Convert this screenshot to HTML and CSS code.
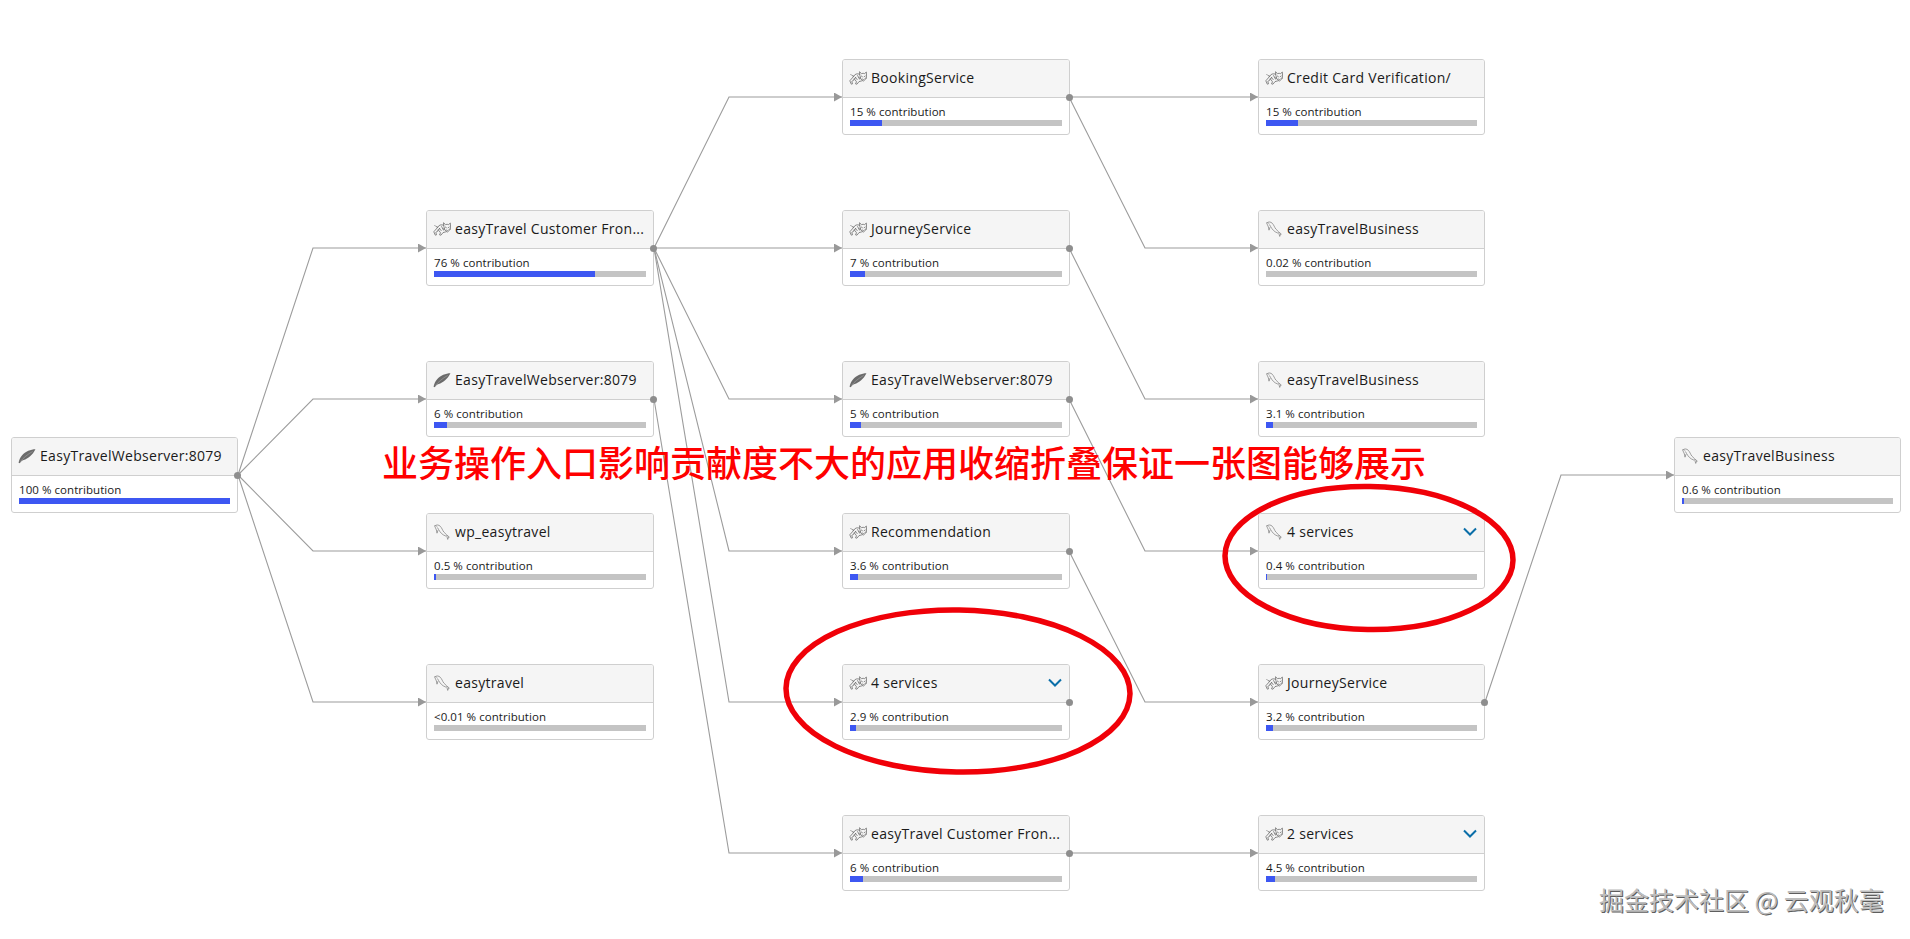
FILE: index.html
```html
<!DOCTYPE html>
<html lang="zh">
<head>
<meta charset="utf-8">
<title>Service flow</title>
<link rel="stylesheet" href="styles.css">
</head>
<body>
<svg class="hidden-defs" width="0" height="0">
  <defs>
    <symbol id="tomcat" viewBox="0 0 18 14">
      <g fill="none" stroke="#666" stroke-width=".75" stroke-linejoin="round" stroke-linecap="round">
        <path d="M10.8 1l1.7 1.6q1.700-.6 3.200 0L17.300 1l.3 4q-.2 3.200-3.300 5.300Q11.200 8.200 10.900 5z"/>
        <path d="M12.300 5l1.100.7M16.200 5l-1.100.7M13.400 8l.9.7.9-.7M11.500 7.200l-1.500-.4M17 7.200l.8-.3"/>
        <path d="M10.700 3.200C8 2.200 5.800 3 4.800 5.200L3 4.600 1.800 3.400"/>
        <path d="M4.800 5.200L.8 9.800l1.500 3.400 1.200-.4-.7-2.400 3-2 1.700 2.400-1 2 1.500.4 2-2.600 2.600-.7"/>
        <path d="M6.200 6.200l2 2.400M8.600 4.600l2 3.600M4.600 8.200l2.300-1.600"/>
      </g>
    </symbol>
    <symbol id="mysql" viewBox="0 0 16 16">
      <g fill="none" stroke="#828282" stroke-width=".75" stroke-linecap="round" stroke-linejoin="round">
        <path d="M.8 1.800C2.500.4 4.800.8 6.200 2.200c1.800 1.800 2.200 4 3.600 5.800 1.500 1.900 3.600 3.300 5.400 5"/>
        <path d="M.8 1.800c.2 1.700 1.100 2.700 1.600 4.200l.6 3.200.9-2.700M3.600 3.800c1.600 2.800 2.800 5.200 5.600 7l2.400 1.200"/>
        <path d="M12.700 11.600l1 3.800.9-2.200M2.300 1.900l.4.500"/>
      </g>
    </symbol>
    <symbol id="apache" viewBox="0 0 16 14">
      <path fill="#6b6b6b" d="M15.500 1C11.500 1 6.500 3 3.500 6.500 2 8.300 1 10.500.5 13l1 .5C2.500 12 3.500 11 5 10.500c4-1 8-4.500 10.500-9.500z"/>
      <path fill="none" stroke="#a8a8a8" stroke-width=".5" d="M2 12C5 8.500 8.500 5.500 13 3"/>
    </symbol>
    <marker id="arrow" viewBox="0 0 8 9" refX="8" refY="4.500" markerWidth="8" markerHeight="9" markerUnits="userSpaceOnUse" orient="auto">
      <path d="M0 0L8 4.500 0 9z" fill="#999"/>
    </marker>
  </defs>
</svg>

<main class="canvas">
  <svg class="edges" width="1910" height="939" viewBox="0 0 1910 939">
    <g class="edge-lines">
      <polyline marker-end="url(#arrow)" points="238,475 313,248 426,248"/>
      <polyline marker-end="url(#arrow)" points="238,475 313,399 426,399"/>
      <polyline marker-end="url(#arrow)" points="238,475 313,551 426,551"/>
      <polyline marker-end="url(#arrow)" points="238,475 313,702 426,702"/>

      <polyline marker-end="url(#arrow)" points="654,248 729,97 842,97"/>
      <polyline marker-end="url(#arrow)" points="654,248 729,248 842,248"/>
      <polyline marker-end="url(#arrow)" points="654,248 729,399 842,399"/>
      <polyline marker-end="url(#arrow)" points="654,248 729,551 842,551"/>
      <polyline marker-end="url(#arrow)" points="654,248 729,702 842,702"/>
      <polyline marker-end="url(#arrow)" points="654,399 729,853 842,853"/>

      <polyline marker-end="url(#arrow)" points="1069,97 1145,97 1258,97"/>
      <polyline marker-end="url(#arrow)" points="1069,97 1145,248 1258,248"/>
      <polyline marker-end="url(#arrow)" points="1069,248 1145,399 1258,399"/>
      <polyline marker-end="url(#arrow)" points="1069,399 1145,551 1258,551"/>
      <polyline marker-end="url(#arrow)" points="1069,551 1145,702 1258,702"/>
      <polyline marker-end="url(#arrow)" points="1069,853 1145,853 1258,853"/>

      <polyline marker-end="url(#arrow)" points="1485,702 1561,475 1674,475"/>
    </g>
  </svg>

  <article class="node c0 y-mid">
    <header class="node-head"><svg class="ico"><use href="#apache"/></svg><span class="name">EasyTravelWebserver:8079</span></header>
    <div class="node-body"><div class="label">100 % contribution</div><div class="bar"><div class="fill" style="width:100%"></div></div></div>
    <i class="dot"></i>
  </article>

  <article class="node c1 r1">
    <header class="node-head"><svg class="ico"><use href="#tomcat"/></svg><span class="name">easyTravel Customer Fron...</span></header>
    <div class="node-body"><div class="label">76 % contribution</div><div class="bar"><div class="fill" style="width:76%"></div></div></div>
    <i class="dot"></i>
  </article>
  <article class="node c1 r2">
    <header class="node-head"><svg class="ico"><use href="#apache"/></svg><span class="name">EasyTravelWebserver:8079</span></header>
    <div class="node-body"><div class="label">6 % contribution</div><div class="bar"><div class="fill" style="width:6%"></div></div></div>
    <i class="dot"></i>
  </article>
  <article class="node c1 r3">
    <header class="node-head"><svg class="ico"><use href="#mysql"/></svg><span class="name">wp_easytravel</span></header>
    <div class="node-body"><div class="label">0.5 % contribution</div><div class="bar"><div class="fill" style="width:1%"></div></div></div>
  </article>
  <article class="node c1 r4">
    <header class="node-head"><svg class="ico"><use href="#mysql"/></svg><span class="name">easytravel</span></header>
    <div class="node-body"><div class="label">&lt;0.01 % contribution</div><div class="bar"></div></div>
  </article>

  <article class="node c2 r0">
    <header class="node-head"><svg class="ico"><use href="#tomcat"/></svg><span class="name">BookingService</span></header>
    <div class="node-body"><div class="label">15 % contribution</div><div class="bar"><div class="fill" style="width:15%"></div></div></div>
    <i class="dot"></i>
  </article>
  <article class="node c2 r1">
    <header class="node-head"><svg class="ico"><use href="#tomcat"/></svg><span class="name">JourneyService</span></header>
    <div class="node-body"><div class="label">7 % contribution</div><div class="bar"><div class="fill" style="width:7%"></div></div></div>
    <i class="dot"></i>
  </article>
  <article class="node c2 r2">
    <header class="node-head"><svg class="ico"><use href="#apache"/></svg><span class="name">EasyTravelWebserver:8079</span></header>
    <div class="node-body"><div class="label">5 % contribution</div><div class="bar"><div class="fill" style="width:5%"></div></div></div>
    <i class="dot"></i>
  </article>
  <article class="node c2 r3">
    <header class="node-head"><svg class="ico"><use href="#tomcat"/></svg><span class="name">Recommendation</span></header>
    <div class="node-body"><div class="label">3.6 % contribution</div><div class="bar"><div class="fill" style="width:3.6%"></div></div></div>
    <i class="dot"></i>
  </article>
  <article class="node c2 r4">
    <header class="node-head"><svg class="ico"><use href="#tomcat"/></svg><span class="name">4 services</span><svg class="chev" viewBox="0 0 14 9"><path d="M1 1.500l6 6 6-6"/></svg></header>
    <div class="node-body"><div class="label">2.9 % contribution</div><div class="bar"><div class="fill" style="width:2.9%"></div></div></div>
    <i class="dot"></i>
  </article>
  <article class="node c2 r5">
    <header class="node-head"><svg class="ico"><use href="#tomcat"/></svg><span class="name">easyTravel Customer Fron...</span></header>
    <div class="node-body"><div class="label">6 % contribution</div><div class="bar"><div class="fill" style="width:6%"></div></div></div>
    <i class="dot"></i>
  </article>

  <article class="node c3 r0">
    <header class="node-head"><svg class="ico"><use href="#tomcat"/></svg><span class="name">Credit Card Verification/</span></header>
    <div class="node-body"><div class="label">15 % contribution</div><div class="bar"><div class="fill" style="width:15%"></div></div></div>
  </article>
  <article class="node c3 r1">
    <header class="node-head"><svg class="ico"><use href="#mysql"/></svg><span class="name">easyTravelBusiness</span></header>
    <div class="node-body"><div class="label">0.02 % contribution</div><div class="bar"></div></div>
  </article>
  <article class="node c3 r2">
    <header class="node-head"><svg class="ico"><use href="#mysql"/></svg><span class="name">easyTravelBusiness</span></header>
    <div class="node-body"><div class="label">3.1 % contribution</div><div class="bar"><div class="fill" style="width:3.1%"></div></div></div>
  </article>
  <article class="node c3 r3">
    <header class="node-head"><svg class="ico"><use href="#mysql"/></svg><span class="name">4 services</span><svg class="chev" viewBox="0 0 14 9"><path d="M1 1.500l6 6 6-6"/></svg></header>
    <div class="node-body"><div class="label">0.4 % contribution</div><div class="bar"><div class="fill" style="width:.6%"></div></div></div>
  </article>
  <article class="node c3 r4">
    <header class="node-head"><svg class="ico"><use href="#tomcat"/></svg><span class="name">JourneyService</span></header>
    <div class="node-body"><div class="label">3.2 % contribution</div><div class="bar"><div class="fill" style="width:3.2%"></div></div></div>
    <i class="dot"></i>
  </article>
  <article class="node c3 r5">
    <header class="node-head"><svg class="ico"><use href="#tomcat"/></svg><span class="name">2 services</span><svg class="chev" viewBox="0 0 14 9"><path d="M1 1.500l6 6 6-6"/></svg></header>
    <div class="node-body"><div class="label">4.5 % contribution</div><div class="bar"><div class="fill" style="width:4.5%"></div></div></div>
  </article>

  <article class="node c4 y-mid">
    <header class="node-head"><svg class="ico"><use href="#mysql"/></svg><span class="name">easyTravelBusiness</span></header>
    <div class="node-body"><div class="label">0.6 % contribution</div><div class="bar"><div class="fill" style="width:1%"></div></div></div>
  </article>

  <svg class="rings" width="1910" height="939" viewBox="0 0 1910 939">
    <ellipse cx="958" cy="691" rx="172" ry="81" transform="rotate(1 958 691)"/>
    <ellipse cx="1369" cy="558" rx="144" ry="71.500" transform="rotate(1 1369 558)"/>
  </svg>

  <p class="annotation">业务操作入口影响贡献度不大的应用收缩折叠保证一张图能够展示</p>
  <p class="watermark">掘金技术社区 @ 云观秋毫</p>
</main>
</body>
</html>
```
FILE: styles.css
```css
* { box-sizing: border-box; }
html, body { margin: 0; padding: 0; background: #fff; overflow: hidden; }
.hidden-defs { position: absolute; }
.canvas {
  position: relative;
  width: 1910px;
  height: 939px;
  font-family: "Open Sans", "Noto Sans", "Noto Sans CJK SC", sans-serif;
  color: #1a1a1a;
}
.edges, .rings { position: absolute; left: 0; top: 0; }
.rings { pointer-events: none; }
.edge-lines polyline { fill: none; stroke: #9c9c9c; stroke-width: 1.1; }
.rings ellipse { fill: none; stroke: #f00008; stroke-width: 5.5; }

.node {
  position: absolute;
  width: 227px;
  height: 76px;
  background: #fff;
  border: 1px solid #cfcfcf;
  border-radius: 3px;
}
.c0 { left: 11px; }
.c1 { left: 426px; width: 228px; }
.c2 { left: 842px; width: 228px; }
.c3 { left: 1258px; }
.c4 { left: 1674px; }
.r0 { top: 59px; }
.r1 { top: 210px; }
.r2 { top: 361px; }
.r3 { top: 513px; }
.r4 { top: 664px; }
.r5 { top: 815px; }
.y-mid { top: 437px; }

.node-head {
  display: flex;
  align-items: center;
  height: 38px;
  padding: 0 7px 2px 6px;
  background: #f5f5f5;
  border-bottom: 1px solid #cfcfcf;
  border-radius: 2px 2px 0 0;
}
.ico { width: 18px; height: 16px; flex: none; margin-right: 4px; }
.name {
  font-size: 14px;
  letter-spacing: .3px;
  white-space: nowrap;
  flex: 1;
  color: #1a1a1a;
}
.chev { width: 14px; height: 9px; flex: none; }
.chev path { fill: none; stroke: #0a6ea8; stroke-width: 2; }

.node-body { padding: 7px 7px 0; }
.label { font-size: 11.5px; letter-spacing: .05px; line-height: 14px; color: #1a1a1a; height: 15px; }
.bar { height: 6px; background: #c4c4c4; }
.fill { height: 100%; background: #3d57f2; }

.dot {
  position: absolute;
  right: -4px;
  top: 34px;
  width: 7px;
  height: 7px;
  border-radius: 50%;
  background: #8e8e8e;
}

.annotation {
  position: absolute;
  left: 382px;
  top: 435px;
  margin: 0;
  font-family: "Noto Sans CJK SC", sans-serif;
  font-size: 36px;
  line-height: 52px;
  font-weight: 500;
  color: #f00;
  white-space: nowrap;
}
.watermark {
  position: absolute;
  left: 1599px;
  top: 881px;
  margin: 0;
  font-family: "Noto Sans CJK SC", sans-serif;
  font-size: 25px;
  line-height: 36px;
  color: #bdbdbd;
  white-space: nowrap;
  text-shadow: 1px 1px 0 #5e5e5e;
}
```
